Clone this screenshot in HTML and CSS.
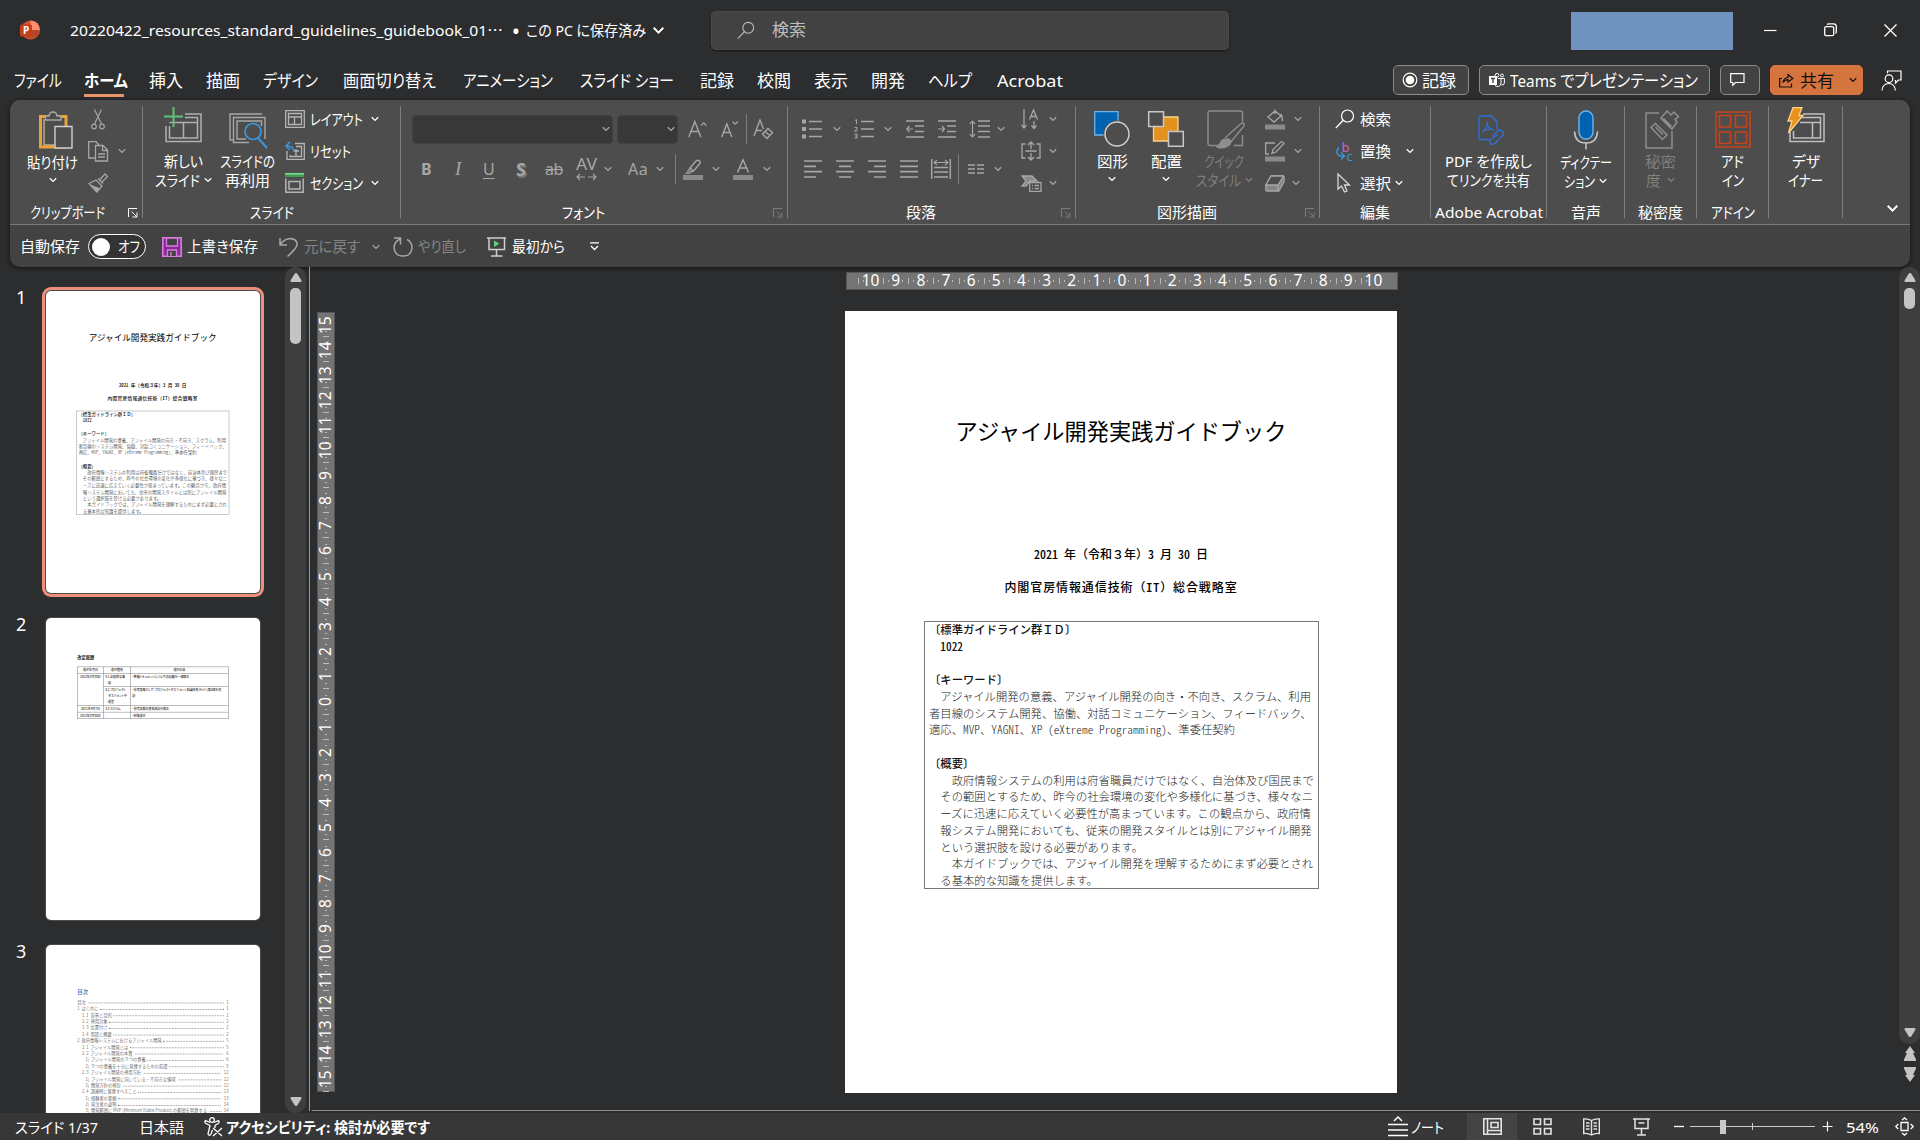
FILE: index.html
```html
<!DOCTYPE html>
<html lang="ja">
<head>
<meta charset="utf-8">
<title>PowerPoint</title>
<link rel="stylesheet" href="styles.css">
</head>
<body>
<svg class="defs" width="0" height="0">
  <symbol id="chev" viewBox="0 0 8 6"><path d="M.8 1.2 4 4.4 7.200 1.200" fill="none" stroke="currentColor" stroke-width="1.3"/></symbol>
  <symbol id="launch" viewBox="0 0 10 10"><path d="M.5 9V.5H9M3.500 3.500 8.500 8.500M9 4.500V9H4.500" fill="none" stroke="currentColor"/></symbol>
  <symbol id="lens" viewBox="0 0 20 20"><circle cx="12.500" cy="7" r="6" fill="none" stroke="currentColor" stroke-width="1.200"/><path d="M8.300 11.300.8 19" stroke="currentColor" stroke-width="1.300"/></symbol>
</svg>

<header class="titlebar">
  <svg class="app" width="20" height="20" viewBox="0 0 20 20"><circle cx="10.500" cy="10" r="9.500" fill="#d35230"/><path d="M10.500.5a9.500 9.500 0 0 1 9.500 9.500h-9.500z" fill="#ff8f6b"/><path d="M1.500 12a9.500 9.500 0 0 0 18.500-2h-9z" fill="#b7472a"/><rect y="4.500" width="12" height="12" rx="1.500" fill="#c43e1c"/><text x="3" y="14" font-size="10" font-weight="700" fill="#fff">P</text></svg>
  <div class="doc"><span data-w="433">20220422_resources_standard_guidelines_guidebook_01<span class="ell">…</span></span><span class="dot">•</span><span data-w="120">この PC に保存済み</span><svg class="dchev" width="13" height="9"><use href="#chev"/></svg></div>
  <div class="search"><svg width="18" height="19"><use href="#lens"/></svg><span>検索</span></div>
  <div class="account"></div>
  <div class="winbtns">
    <svg width="13" height="13"><path d="M0 6.500H12.500" stroke="#fff" stroke-width="1.200"/></svg>
    <svg width="13" height="14" fill="none" stroke="#fff" stroke-width="1.300"><rect x=".7" y="3.700" width="9" height="9" rx="1.500"/><path d="M3 1.500Q3.500.8 5 .8H9.500Q12.300.8 12.300 3.500V8.500Q12.300 10 11.500 10.500"/></svg>
    <svg width="13" height="13"><path d="M.5.5 12.500 12.500M12.500.5.5 12.500" stroke="#fff" stroke-width="1.400"/></svg>
  </div>
</header>

<nav class="tabs">
  <div class="tablist">
    <span data-w="48">ファイル</span><span class="active" data-w="44">ホーム</span><span data-w="34">挿入</span><span data-w="34">描画</span><span data-w="55">デザイン</span><span data-w="93">画面切り替え</span><span data-w="90">アニメーション</span><span data-w="94">スライド ショー</span><span data-w="34">記録</span><span data-w="34">校閲</span><span data-w="34">表示</span><span data-w="34">開発</span><span data-w="44">ヘルプ</span><span data-w="66">Acrobat</span>
  </div>
  <div class="tabbtns">
    <div class="btn rec"><svg width="16" height="16"><circle cx="8" cy="8" r="6.800" fill="none" stroke="#fff" stroke-width="1.200"/><circle cx="8" cy="8" r="4.300" fill="#fff"/></svg><span data-w="34">記録</span></div>
    <div class="btn teams"><svg width="16" height="15" fill="#fff"><path d="M0 3h8v9H0z"/><path d="M2 5.500h4M4 5.500V10" stroke="#444" stroke-width="1.300"/><circle cx="8" cy="2.300" r="1.900" fill="none" stroke="#fff"/><circle cx="13" cy="2.500" r="1.500" fill="none" stroke="#fff"/><path d="M9 5.500h3V10a3.500 3.500 0 0 1-6 2.500M12 5.500h3.400V10q-.5 2.500-3 2" fill="none" stroke="#fff"/></svg><span data-w="188">Teams でプレゼンテーション</span></div>
    <div class="btn note"><svg width="15" height="14" fill="none" stroke="#fff" stroke-width="1.200"><path d="M.7.700H14V9.500H5.500L2.800 12.300V9.500H.7z"/></svg></div>
    <div class="btn share"><svg width="15" height="15" fill="none" stroke="#111" stroke-width="1.200"><path d="M3 5.500H.7V14H12.500V10.500M4 9.500Q4.500 5 9 4.500V1.500L13.800 5.500 9 9V6.700Q6 6.500 4 9.500z"/></svg><span data-w="34">共有</span><svg width="8" height="6"><use href="#chev"/></svg></div>
    <svg width="21" height="21" fill="none" stroke="#fff" stroke-width="1.200"><path d="M6.500 3.500V1H20V10H17.500L14.500 13V10"/><circle cx="8" cy="8.700" r="3.800"/><path d="M1 20.500q.5-7 7-7 5.500 0 6.500 7"/></svg>
  </div>
</nav>

<section class="panel">
  <div class="ribbon">
    <div class="group g-clip">
      <div class="content">
        <div class="big"><div class="ico"><svg width="34" height="38" fill="none"><path d="M1.500 5.500H27V36H1.500z" stroke="#e8a33a" stroke-width="3"/><path d="M5 8V34H17" stroke="#f6d9a0" stroke-width="1"/><path d="M6.500 9V5H10Q10.500 1 14 1T18 5h4V9z" fill="#4d4d4d" stroke="#a8a8a8" stroke-width="1.400"/><path d="M16 15.500H33V37H16z" fill="#4d4d4d" stroke="#d0d0d0" stroke-width="1.400"/></svg></div><span data-w="51">貼り付け</span><svg class="cv" width="8" height="6"><use href="#chev"/></svg></div>
        <div class="rows dim">
          <div><svg width="14" height="21" fill="none" stroke="currentColor" stroke-width="1.200"><path d="M3.500.5 10.500 15M10.500.5 3.500 15"/><circle cx="3" cy="17.500" r="2.300"/><circle cx="11" cy="17.500" r="2.300"/></svg></div>
          <div class="copy"><svg width="21" height="21" fill="none" stroke="currentColor" stroke-width="1.300"><path d="M7 17H.7V.7H8L11 4M7.500 4.500H15L19.500 9V20H7.500zM14.500 4.500V9.500H19.500M10 13H17M10 16H17"/></svg><svg width="8" height="6"><use href="#chev"/></svg></div>
          <div><svg width="20" height="20" fill="none" stroke="currentColor" stroke-width="1.300"><path d="M1 10.500 8 7 14 13 9 19z"/><path d="M3 12.500 11 15.500 8.500 18.500z" fill="currentColor"/><path d="M10 5.500 15 10.500M11 7.500 17 1 19.500 3.500 13.500 9.500"/></svg></div>
        </div>
      </div>
      <div class="label"><span data-w="75">クリップボード</span><svg class="launch" width="10" height="10"><use href="#launch"/></svg></div>
    </div>

    <div class="group g-slide">
      <div class="content">
        <div class="big b1"><div class="ico up"><svg width="38" height="36" fill="none" stroke="#b0b0b0"><path d="M2 19V34.500H37V7H21" stroke-width="1.500"/><path d="M5.500 19V31H33.500V10.500H21M5.500 15.500H33.500M19.500 15.500V31" stroke-width="1.500"/><path d="M9.500 0V20M0 9.500H19" stroke="#63c174" stroke-width="2"/></svg></div><span data-w="39">新しい</span><span class="ln"><span data-w="45">スライド</span><svg width="8" height="6"><use href="#chev"/></svg></span></div>
        <div class="big b2"><div class="ico"><svg width="39" height="36" fill="none" stroke="#a8a8a8" stroke-width="1.400"><path d="M4 27H1V1H33M20 29.500H4.500V4.500H36V26M17 26H8V8H32.500V13"/><circle cx="24" cy="18.500" r="8" stroke="#3a96dd" stroke-width="1.700" fill="#4d4d4d"/><path d="M29 25 38 35" stroke="#3a96dd" stroke-width="2"/></svg></div><span data-w="55">スライドの</span><span data-w="45">再利用</span></div>
        <div class="rows">
          <div><svg width="20" height="18" fill="none" stroke="#b5b5b5" stroke-width="1.300"><path d="M.7.7H19.300V17.300H.7z"/><path d="M3.500 3.500H16.500V14.500H3.500zM3.500 7H16.500M9.500 7V14.500"/></svg><span data-w="53">レイアウト</span><svg width="8" height="6"><use href="#chev"/></svg></div>
          <div><svg width="20" height="18" fill="none" stroke="#b5b5b5" stroke-width="1.300"><path d="M2 9V17.300H19.300V1.500H10M5 13V14.500H16.500V4.500H11M9 9H14M11 7V14"/><path d="M9 10Q9 4 1.500 4M5 0 1 4 5 8" stroke="#3a96dd" stroke-width="1.600"/></svg><span data-w="41">リセット</span></div>
          <div><svg width="20" height="20" fill="none" stroke="#b5b5b5" stroke-width="1.500"><path d="M0 0H19V4H0z" fill="#3f9b52" stroke="none"/><path d="M0 .7H19" stroke="#7fe08f"/><path d="M.8 5.500V19.200H18.200V5.500M4 8.500H15V16H4z"/></svg><span data-w="53">セクション</span><svg width="8" height="6"><use href="#chev"/></svg></div>
        </div>
      </div>
      <div class="label"><span data-w="44">スライド</span></div>
    </div>

    <div class="group g-font">
      <div class="content two dim">
        <div class="f1">
          <div class="combo"><svg width="8" height="6"><use href="#chev"/></svg></div><div class="combo sz"><svg width="8" height="6"><use href="#chev"/></svg></div>
          <svg width="19" height="19" fill="none" stroke="currentColor" stroke-width="1.400"><path d="M.8 17 6.800 1.500 12.800 17M3 11.500H10.600"/><path d="M13 5.500 15.700 2.800 18.400 5.500" stroke-width="1.200"/></svg>
          <svg width="19" height="19" fill="none" stroke="currentColor" stroke-width="1.400"><path d="M.8 17 5.800 4 10.800 17M2.600 12.500H9"/><path d="M11.500 1.500 14.200 4.200 16.900 1.500" stroke-width="1.200"/></svg>
          <i class="sep"></i>
          <svg width="21" height="22" fill="none" stroke="currentColor" stroke-width="1.400"><path d="M1 18 7 2 10.500 11M3 12.500H9M9.500 16 15 10.500 19.500 14.500 14 20.500zM12 13.500 16.800 17.500"/></svg>
        </div>
        <div class="f2">
          <b class="gl">B</b><i class="gl ser">I</i><span class="gl un">U</span><b class="gl sh">S</b><s class="gl ab">ab</s>
          <svg width="22" height="25" fill="none" stroke="currentColor"><text x="0" y="13" font-size="16" stroke="none" fill="currentColor" textLength="21" lengthAdjust="spacingAndGlyphs">AV</text><path d="M1 20H9M4 17 1 20 4 23M12 20H20M17 17 20 20 17 23" stroke-width="1.100"/></svg>
          <svg width="8" height="6"><use href="#chev"/></svg><span class="gl aa">Aa</span><svg width="8" height="6"><use href="#chev"/></svg><i class="sep"></i>
          <svg width="20" height="21"><path d="M0 16H20V21H0z" fill="#8a8a8a"/><path d="M7 9 13 2Q15 .5 16.500 2T16.500 5L10.500 12zM7 9 4 14 10.500 12" fill="none" stroke="currentColor" stroke-width="1.400"/><path d="M2 15 6 10 9 13 7 15z" fill="#8a8a8a"/></svg><svg width="8" height="6"><use href="#chev"/></svg>
          <svg width="20" height="21"><path d="M0 16H20V21H0z" fill="#8a8a8a"/><path d="M4.500 13.500 10 .8 15.500 13.500M6.500 9H13.500" fill="none" stroke="currentColor" stroke-width="1.500"/></svg><svg width="8" height="6"><use href="#chev"/></svg>
        </div>
      </div>
      <div class="label"><span data-w="43">フォント</span><svg class="launch dim" width="10" height="10"><use href="#launch"/></svg></div>
    </div>

    <div class="group g-para">
      <div class="content dim">
        <div class="pleft">
          <div class="p1">
            <svg width="20" height="20" stroke="currentColor" stroke-width="1.700"><path d="M7 2.500H20M7 10H20M7 17.500H20"/><path d="M0 2.500H4M0 10H4M0 17.500H4" stroke-width="4"/></svg><svg width="8" height="6"><use href="#chev"/></svg>
            <svg width="20" height="20" stroke="currentColor" stroke-width="1.700"><path d="M7 2.500H20M7 10H20M7 17.500H20"/><path d="M1 1.500 2.500.5V5M.5 8.500H3V10L.5 12H3.500M.5 15H3V19H.5M1 17H3" stroke-width="1" fill="none"/></svg><svg width="8" height="6"><use href="#chev"/></svg>
            <svg width="18" height="18" fill="none" stroke="currentColor" stroke-width="1.700"><path d="M0 1H18M9 6H18M9 11.500H18M0 17H18"/><path d="M7 9H.8M3.500 6 .8 9 3.500 12" stroke-width="1.200"/></svg>
            <svg width="18" height="18" fill="none" stroke="currentColor" stroke-width="1.700"><path d="M0 1H18M9 6H18M9 11.500H18M0 17H18"/><path d="M0 9H6.500M4 6 6.500 9 4 12" stroke-width="1.200"/></svg>
            <svg width="21" height="18" fill="none" stroke="currentColor" stroke-width="1.700"><path d="M9 1H21M9 6H21M9 11.500H21M9 17H21"/><path d="M3.500 1V17M.8 3.800 3.500 1 6.200 3.800M.8 14.200 3.500 17 6.200 14.200" stroke-width="1.200"/></svg><svg width="8" height="6"><use href="#chev"/></svg>
          </div>
          <div class="p2">
            <svg width="18" height="18" stroke="currentColor" stroke-width="1.700"><path d="M0 1H18M0 6.300H12M0 11.600H18M0 17H12"/></svg>
            <svg width="18" height="18" stroke="currentColor" stroke-width="1.700"><path d="M0 1H18M3 6.300H15M0 11.600H18M3 17H15"/></svg>
            <svg width="18" height="18" stroke="currentColor" stroke-width="1.700"><path d="M0 1H18M6 6.300H18M0 11.600H18M6 17H18"/></svg>
            <svg width="18" height="18" stroke="currentColor" stroke-width="1.700"><path d="M0 1H18M0 6.300H18M0 11.600H18M0 17H18"/></svg>
            <svg width="20" height="20" fill="none" stroke="currentColor" stroke-width="1.500"><path d="M.7 0V20M19.300 0V20M3 8.500H17M3 13H17M3 18H17"/><path d="M3 3.500H17M6 1 3 3.500 6 6M14 1 17 3.500 14 6" stroke-width="1.100"/></svg>
            <i class="sep"></i>
            <svg width="16" height="10" stroke="currentColor" stroke-width="1.500"><path d="M0 1H7M9 1H16M0 5H7M9 5H16M0 9H7M9 9H16"/></svg><svg width="8" height="6"><use href="#chev"/></svg>
          </div>
        </div>
        <div class="rows">
          <div><svg width="20" height="21" fill="none" stroke="currentColor" stroke-width="1.300"><path d="M3 0V19M.5 16 3 19 5.500 16M13 12V19.500M10.500 16.500 13 19.500 15.500 16.500M8.500 10.500 12.500 1 16.500 10.500M10 7.500H15"/></svg><svg width="8" height="6"><use href="#chev"/></svg></div>
          <div><svg width="20" height="20" fill="none" stroke="currentColor" stroke-width="1.300"><path d="M4.500 3H1V17H4.500M15.500 3H19V17H15.500M4.500 10H15.500M10 1V8M7 4 10 1 13 4M10 12V19M7 16 10 19 13 16"/></svg><svg width="8" height="6"><use href="#chev"/></svg></div>
          <div><svg width="21" height="17" fill="none" stroke="currentColor" stroke-width="1.300"><path d="M1 1H11L16 6H9L5 11H1L5 6z" fill="#8a8a8a"/><path d="M8.700 7.500H20V16.300H8.700z" fill="#4d4d4d"/><path d="M11 10.500H12M13.500 10.500H18M11 13.500H12M13.500 13.500H18"/></svg><svg width="8" height="6"><use href="#chev"/></svg></div>
        </div>
      </div>
      <div class="label"><span data-w="30">段落</span><svg class="launch dim" width="10" height="10"><use href="#launch"/></svg></div>
    </div>

    <div class="group g-draw">
      <div class="content">
        <div class="big"><div class="ico"><svg width="36" height="36"><path d="M.7.7H24V24H.7z" fill="#0063b1" stroke="#6cb4ee" stroke-width="1.300"/><circle cx="23" cy="23" r="13.500" fill="#4d4d4d"/><circle cx="23" cy="23" r="12" fill="#4d4d4d" stroke="#d0d0d0" stroke-width="1.500"/></svg></div><span data-w="31">図形</span><svg class="cv" width="8" height="6"><use href="#chev"/></svg></div>
        <div class="big"><div class="ico"><svg width="36" height="36"><path d="M5.500 6H30V30H5.500z" fill="#e3911f" stroke="#fbd38a" stroke-width="1.300"/><path d="M.7.7H15.500V15.500H.7zM20.500 20.500H35.300V35.300H20.500z" fill="#4d4d4d" stroke="#c8c8c8" stroke-width="1.500"/></svg></div><span data-w="31">配置</span><svg class="cv" width="8" height="6"><use href="#chev"/></svg></div>
        <div class="big dimtext"><div class="ico"><svg width="39" height="38" fill="none" stroke="#8e8e8e" stroke-width="1.400"><path d="M10 35.500H3Q1 35.500 1 33.500V3Q1 1 3 1H33Q35.500 1 35.500 3V12M35.500 25V35.500H27"/><path d="M18 28 34 13.500Q38 12 37 16L23 33"/><path d="M10 36Q13 35 14 32T22 29Q26 33 21 36T10 37z" fill="#8e8e8e"/></svg></div><span data-w="40">クイック</span><span class="ln"><span data-w="45">スタイル</span><svg width="8" height="6"><use href="#chev"/></svg></span></div>
        <div class="rows dim">
          <div><svg width="20" height="21" fill="none" stroke="currentColor" stroke-width="1.400"><path d="M0 15.500H20V20.500H0z" fill="#8a8a8a" stroke="none"/><path d="M3 8 10 2 16 7 9 13zM10 5V.5M16 5Q18 9 17 12"/></svg><svg width="8" height="6"><use href="#chev"/></svg></div>
          <div><svg width="20" height="21" fill="none" stroke="currentColor" stroke-width="1.300"><path d="M0 15.500H20V20.500H0z" fill="#8a8a8a" stroke="none"/><path d="M10 2H.7V13H4M7 12.500 8 8.500 16 1Q18 .5 19 2.500L11 11z"/></svg><svg width="8" height="6"><use href="#chev"/></svg></div>
          <div class="er"><svg width="20" height="17" stroke="currentColor" stroke-width="1.300" stroke-linejoin="round"><path d="M6 1H17.500Q19.500 1 19 3V7L14 16H2Q.7 16 .8 14.500V10z" fill="#858585"/><path d="M6 1H18.500L13 10H.8z" fill="#4d4d4d"/><path d="M13 10V16"/></svg><svg width="8" height="6"><use href="#chev"/></svg></div>
        </div>
      </div>
      <div class="label"><span data-w="60">図形描画</span><svg class="launch dim" width="10" height="10"><use href="#launch"/></svg></div>
    </div>

    <div class="group g-edit">
      <div class="content">
        <div class="rows">
          <div><svg width="20" height="20"><use href="#lens"/></svg><span data-w="31">検索</span></div>
          <div class="rep"><svg width="20" height="21" fill="none"><text x="6.500" y="10.500" font-size="13" fill="#c864c8">b</text><text x="11.500" y="20" font-size="13" fill="#3a96dd">c</text><path d="M4 6.500Q-1 12 5 15H9M6 11.500 9.500 15 6 18.500" stroke="#3a96dd" stroke-width="1.400"/></svg><span data-w="31">置換</span><svg width="8" height="6"><use href="#chev"/></svg></div>
          <div><svg width="20" height="20"><path d="M3 1V16L6.500 13 9.500 19 12 18 9.500 12H14.500z" fill="none" stroke="#d8d8d8" stroke-width="1.300"/></svg><span data-w="31">選択</span><svg width="8" height="6"><use href="#chev"/></svg></div>
        </div>
      </div>
      <div class="label"><span data-w="30">編集</span></div>
    </div>

    <div class="group g-acro">
      <div class="content"><div class="big"><div class="ico"><svg width="26" height="30" fill="none" stroke="#2f6fe0" stroke-width="1.300"><path d="M11 24.500H3Q1 24.500 1 22.500V3Q1 1 3 1H13L19 7V14"/><path d="M9.500 7Q9.500 12 4.500 17.500M9.500 7V10Q11 14 16 15M5 16.500Q10 13.500 15.500 14.500" stroke-width="1.100"/><path d="M15 21 19 16.500Q22 14 24.500 16.500T24 21L22 23M20 19.500 13 24Q10.500 27 12.500 28.500T17 28.500L21 24"/></svg></div><span data-w="87">PDF を作成し</span><span data-w="83">てリンクを共有</span></div></div>
      <div class="label"><span data-w="108">Adobe Acrobat</span></div>
    </div>
    <div class="group g-voice">
      <div class="content"><div class="big low"><div class="ico"><svg width="26" height="40" fill="none"><rect x="6" y="1" width="14" height="28" rx="7" fill="#0063b1" stroke="#6cb4ee" stroke-width="1.400"/><path d="M1.500 21.500Q2 33 13 33T24.500 21.500M13 33V39.500" stroke="#c8c8c8" stroke-width="1.500"/></svg></div><span data-w="52">ディクテー</span><span class="ln"><span data-w="31">ション</span><svg width="8" height="6"><use href="#chev"/></svg></span></div></div>
      <div class="label"><span data-w="30">音声</span></div>
    </div>
    <div class="group g-sens">
      <div class="content"><div class="big dimtext"><div class="ico"><svg width="34" height="39" fill="none" stroke="#8e8e8e" stroke-width="1.500"><path d="M14 3H1V38H27V21"/><path d="M6 17.500 10.500 13.500 22 25 17.500 29.500zM10.500 17 18 24.500M16 8 22 1 26 5 29 2 33.500 7 30 9.500 32 12 27 19z"/><path d="M18 9 26 17" stroke-width="3"/></svg></div><span data-w="31">秘密</span><span class="ln"><span data-w="15">度</span><svg width="8" height="6"><use href="#chev"/></svg></span></div></div>
      <div class="label"><span data-w="45">秘密度</span></div>
    </div>
    <div class="group g-add">
      <div class="content"><div class="big"><div class="ico"><svg width="36" height="37" fill="none" stroke="#c8421a" stroke-width="1.600"><path d="M1 1H35V36H1z"/><path d="M4.500 4.500H15.500V16H4.500zM20.500 4.500H31.500V16H20.500zM4.500 21H15.500V32.500H4.500zM20.500 21H31.500V32.500H20.500z"/></svg></div><span data-w="23">アド</span><span data-w="22">イン</span></div></div>
      <div class="label"><span data-w="44">アドイン</span></div>
    </div>
    <div class="group g-des">
      <div class="content"><div class="big"><div class="ico up"><svg width="38" height="36" fill="none" stroke="#c0c0c0" stroke-width="1.500"><path d="M16 7H37V34.500H3V25M14 10.500H33.500V31H6.500V24M13 15.500H33.500M25.500 15.500V31"/><path d="M6 .7H15L12 8.500H16L1.500 26 5 14H1z" fill="#e8921e" stroke="#ffd387" stroke-width="1.300"/></svg></div><span data-w="28">デザ</span><span data-w="35">イナー</span></div></div>
    </div>
    <svg class="collapse" width="13" height="9"><use href="#chev"/></svg>
  </div>

  <div class="qat">
    <span data-w="60">自動保存</span>
    <div class="toggle"><i></i><span data-w="22">オフ</span></div>
    <svg width="20" height="20"><path d="M.8.800H19.200V19.200H.8z" fill="#8b2a96" stroke="#d77ee0" stroke-width="1.600"/><path d="M4.500 1V9H15.500V1z" fill="#424242" stroke="#d77ee0" stroke-width="1.300"/><path d="M5.500 19V13H14.500V19" fill="#424242" stroke="#d77ee0" stroke-width="1.300"/><path d="M9 15V19" stroke="#d77ee0" stroke-width="1.300"/></svg>
    <span data-w="71">上書き保存</span>
    <svg class="dim" width="20" height="20" fill="none" stroke="currentColor" stroke-width="1.500"><path d="M1 1V8H8M1 8Q5 1.500 12 1.500 18.500 2.500 18 8 17 12 8.500 19.500"/></svg>
    <span class="off" data-w="56">元に戻す</span>
    <svg class="dim" width="8" height="6"><use href="#chev"/></svg>
    <svg class="dim" width="20" height="20" fill="none" stroke="currentColor" stroke-width="1.500"><path d="M1 1H7.500V7.500M7 2Q1 5 1 11 2 19 10 19T19 11Q19 5 14 2.500"/></svg>
    <span class="off" data-w="48">やり直し</span>
    <svg width="20" height="20" fill="none" stroke="#d0d0d0" stroke-width="1.500"><path d="M0 1H19M2 1V12.500H17.500V1M9.500 12.500V18.500M4 19H15.500"/><path d="M7 3.500 12.500 6.700 7 10z" fill="#5fd07a" stroke="none"/></svg>
    <span data-w="53">最初から</span>
    <svg width="9" height="9" fill="none" stroke="#fff" stroke-width="1.300"><path d="M0 .8H9M1 4 4.500 7.500 8 4"/></svg>
  </div>
</section>

<main class="work">
  <aside class="thumbs">
    <div class="titem"><b>1</b><div class="thumb sel"><div class="page">
      <h1>アジャイル開発実践ガイドブック</h1>
      <p class="date"><u>2021 </u>年（令和３年）<u>3 </u>月<u> 30 </u>日</p><p class="org">内閣官房情報通信技術（<u>IT</u>）総合戦略室</p>
      <div class="box"><p class="hd">〔標準ガイドライン群ＩＤ〕</p><p class="hd">　<u>1022</u></p><p>&nbsp;</p><p class="hd">〔キーワード〕</p><p>　アジャイル開発の意義、アジャイル開発の向き・不向き、スクラム、利用</p><p>者目線のシステム開発、協働、対話コミュニケーション、フィードバック、</p><p>適応、<u>MVP</u>、<u>YAGNI</u>、<u>XP (eXtreme Programming)</u>、準委任契約</p><p>&nbsp;</p><p class="hd">〔概要〕</p><p>　　政府情報システムの利用は府省職員だけではなく、自治体及び国民まで</p><p>　その範囲とするため、昨今の社会環境の変化や多様化に基づき、様々なニ</p><p>　ーズに迅速に応えていく必要性が高まっています。この観点から、政府情</p><p>　報システム開発においても、従来の開発スタイルとは別にアジャイル開発</p><p>　という選択肢を設ける必要があります。</p><p>　　本ガイドブックでは、アジャイル開発を理解するためにまず必要とされ</p><p>　る基本的な知識を提供します。</p></div>
    </div></div></div>
    <div class="titem"><b>2</b><div class="thumb"><div class="page hist">
      <h2>改定履歴</h2>
      <table>
        <tr><th>改定年月日</th><th>改定箇所</th><th>改定内容</th></tr>
        <tr class="r1"><td rowspan="2" class="c">2022年3月30日</td><td>4.1 全般的な事<br>　項</td><td>・各種ドキュメントについての記載を一部修正</td></tr>
        <tr class="r2"><td>3.2 プロジェクト<br>　マネジメントや<br>　運営</td><td>・参考情報として「プロジェクトマネジメント知識体系ガイド」第6版を追<br>記</td></tr>
        <tr><td class="c">2021年4月7日</td><td>3.3 スクラム</td><td>・参考文献の書名誤記を修正</td></tr>
        <tr><td class="c">2021年3月30日</td><td>-</td><td>・初版決定</td></tr>
      </table>
    </div></div></div>
    <div class="titem"><b>3</b><div class="thumb"><div class="page toc">
      <h2>目次</h2>
      <p><span>目次</span><i></i><em>1</em></p>
      <p><span>1&nbsp; はじめに</span><i></i><em>1</em></p>
      <p class="l1"><span>1. 1&nbsp; 背景と目的</span><i></i><em>1</em></p>
      <p class="l1"><span>1. 2&nbsp; 適用対象</span><i></i><em>2</em></p>
      <p class="l1"><span>1. 3&nbsp; 位置付け</span><i></i><em>2</em></p>
      <p class="l1"><span>1. 4&nbsp; 用語と概要</span><i></i><em>2</em></p>
      <p><span>2&nbsp; 政府情報システムにおけるアジャイル開発</span><i></i><em>5</em></p>
      <p class="l1"><span>2. 1&nbsp; アジャイル開発とは</span><i></i><em>5</em></p>
      <p class="l1"><span>2. 2&nbsp; アジャイル開発の本質</span><i></i><em>6</em></p>
      <p class="l2"><span>1)&nbsp; アジャイル開発の９つの意義</span><i></i><em>6</em></p>
      <p class="l2"><span>2)&nbsp; ９つの意義を十分に発揮するための前提</span><i></i><em>9</em></p>
      <p class="l1"><span>2. 3&nbsp; アジャイル開発の適用方針</span><i></i><em>12</em></p>
      <p class="l2"><span>1)&nbsp; アジャイル開発に向いている・不向きな領域</span><i></i><em>12</em></p>
      <p class="l2"><span>2)&nbsp; 開発方針の検討</span><i></i><em>12</em></p>
      <p class="l1"><span>2. 4&nbsp; 調達時に留意すべきこと</span><i></i><em>13</em></p>
      <p class="l2"><span>1)&nbsp; 経験者の参画</span><i></i><em>13</em></p>
      <p class="l2"><span>2)&nbsp; 発注者の姿勢</span><i></i><em>14</em></p>
      <p class="l2"><span>3)&nbsp; 開発範囲に MVP (Minimum Viable Product) の範囲を明意する</span><i></i><em>14</em></p>
    </div></div></div>
  </aside>
  <div class="vbar left"><svg width="12" height="9"><path d="M6 0Q7 0 7.500 1L11.500 7.500Q12 9 10.500 9H1.500Q0 9 .5 7.500L4.500 1Q5 0 6 0z" fill="#c4c4c4"/></svg><i></i><svg class="dn" width="12" height="9"><path d="M6 9Q7 9 7.500 8L11.500 1.500Q12 0 10.500 0H1.500Q0 0 .5 1.500L4.500 8Q5 9 6 9z" fill="#c4c4c4"/></svg></div>
  <div class="split"></div>
  <div class="canvas">
    <div class="vruler"><span>15</span><span>14</span><span>13</span><span>12</span><span>11</span><span>10</span><span>9</span><span>8</span><span>7</span><span>6</span><span>5</span><span>4</span><span>3</span><span>2</span><span>1</span><span>0</span><span>1</span><span>2</span><span>3</span><span>4</span><span>5</span><span>6</span><span>7</span><span>8</span><span>9</span><span>10</span><span>11</span><span>12</span><span>13</span><span>14</span><span>15</span></div>
    <div class="stage">
      <div class="hruler"><span>10</span><span>9</span><span>8</span><span>7</span><span>6</span><span>5</span><span>4</span><span>3</span><span>2</span><span>1</span><span>0</span><span>1</span><span>2</span><span>3</span><span>4</span><span>5</span><span>6</span><span>7</span><span>8</span><span>9</span><span>10</span></div>
      <div class="page main">
        <h1>アジャイル開発実践ガイドブック</h1>
        <p class="date"><u>2021 </u>年（令和３年）<u>3 </u>月<u> 30 </u>日</p><p class="org">内閣官房情報通信技術（<u>IT</u>）総合戦略室</p>
        <div class="box"><p class="hd">〔標準ガイドライン群ＩＤ〕</p><p class="hd">　<u>1022</u></p><p>&nbsp;</p><p class="hd">〔キーワード〕</p><p>　アジャイル開発の意義、アジャイル開発の向き・不向き、スクラム、利用</p><p>者目線のシステム開発、協働、対話コミュニケーション、フィードバック、</p><p>適応、<u>MVP</u>、<u>YAGNI</u>、<u>XP (eXtreme Programming)</u>、準委任契約</p><p>&nbsp;</p><p class="hd">〔概要〕</p><p>　　政府情報システムの利用は府省職員だけではなく、自治体及び国民まで</p><p>　その範囲とするため、昨今の社会環境の変化や多様化に基づき、様々なニ</p><p>　ーズに迅速に応えていく必要性が高まっています。この観点から、政府情</p><p>　報システム開発においても、従来の開発スタイルとは別にアジャイル開発</p><p>　という選択肢を設ける必要があります。</p><p>　　本ガイドブックでは、アジャイル開発を理解するためにまず必要とされ</p><p>　る基本的な知識を提供します。</p></div>
      </div>
    </div>
    <div class="rightbar">
      <div class="vbar right"><svg width="12" height="9"><path d="M6 0Q7 0 7.500 1L11.500 7.500Q12 9 10.500 9H1.500Q0 9 .5 7.500L4.500 1Q5 0 6 0z" fill="#c4c4c4"/></svg><i></i><svg class="dn" width="12" height="9"><path d="M6 9Q7 9 7.500 8L11.500 1.500Q12 0 10.500 0H1.500Q0 0 .5 1.500L4.500 8Q5 9 6 9z" fill="#c4c4c4"/></svg></div>
      <svg width="12" height="15" fill="#c4c4c4"><path d="M6 0 11 7H9L12 13.500V15H0V13.500L3 7H1z"/></svg>
      <svg width="12" height="15" fill="#c4c4c4"><path d="M6 15 11 8H9L12 1.500V0H0V1.500L3 8H1z"/></svg>
    </div>
  </div>
</main>

<footer class="status">
  <div class="sl"><span data-w="83">スライド 1/37</span><span data-w="45">日本語</span><svg width="19" height="20" fill="none" stroke="#fff" stroke-width="1.300"><circle cx="8" cy="3" r="2.300"/><path d="M6 5.500 1.500 3.500Q0 5.500 2 6.500L6 8.500 4 17Q5.500 19.500 7 17L8.500 13M10 5.500 14.500 3.500Q16 5.500 14 6.500L11 8.500V11M9 11 18 19M18 11 9 19"/></svg><strong data-w="204">アクセシビリティ: 検討が必要です</strong></div>
  <div class="sr">
    <svg width="20" height="21" fill="none" stroke="#fff" stroke-width="1.500"><path d="M6 5 10 1 14 5M0 8.500H20M0 14H20M0 19.500H20"/></svg><span data-w="33">ノート</span>
    <div class="view"><svg width="19" height="17" fill="none" stroke="#e4e4e4" stroke-width="1.600"><path d="M.8.8H18.200V16.200H.8zM4.500 1V16M4.500 12.500H18M8 4.500H15V9.500H8z"/></svg></div>
    <svg width="19" height="17" fill="none" stroke="#e4e4e4" stroke-width="1.600"><path d="M1 1H7.500V6.500H1zM11.500 1H18V6.500H11.500zM1 10.500H7.500V16H1zM11.500 10.500H18V16H11.500z"/></svg>
    <svg width="17" height="18" fill="none" stroke="#e4e4e4" stroke-width="1.400"><path d="M8.500 2.500Q5 .5.7 1V15.500Q5 15 8.500 17 12 15 16.300 15.500V1Q12 .5 8.500 2.500V17M3 5H6.500M3 8H6.500M3 11H6.500M10.500 5H14M10.500 8H14M10.500 11H14"/></svg>
    <svg width="17" height="18" fill="none" stroke="#e4e4e4" stroke-width="1.500"><path d="M0 1H17M2 1V10.500H15V1M8.500 10.500V17M4 17H13M5.500 5H11.500"/></svg>
    <svg width="11" height="11"><path d="M0 5.500H10" stroke="#fff" stroke-width="1.300"/></svg>
    <div class="slider"><i></i></div>
    <svg width="11" height="11"><path d="M.5 5.500H10.500M5.500.5V10.500" stroke="#fff" stroke-width="1.200"/></svg>
    <span data-w="33">54%</span>
    <svg width="19" height="19" fill="none" stroke="#fff" stroke-width="1.300"><path d="M6 5.500H13V13.500H6zM7 3 9.500.8 12 3M7 16 9.500 18.200 12 16M3.300 7 .8 9.500 3.300 12M15.700 7 18.200 9.500 15.700 12"/></svg>
  </div>
</footer>
<script src="fit.js"></script>
</body>
</html>
```
FILE: styles.css
```css
* { box-sizing: border-box; }
body { margin: 0; width: 1920px; height: 1140px; overflow: hidden; display: flex; flex-direction: column; background: #2c2d2f; color: #fff; font-family: "Noto Sans", "Noto Sans CJK JP", sans-serif; font-size: 15px; line-height: 19px; text-spacing-trim: space-all; }
svg { display: block; flex: none; overflow: visible; }
.defs { position: absolute; }
[data-w] { display: inline-block; white-space: nowrap; transform-origin: 0 50%; flex: none; font-feature-settings: "palt"; }

.titlebar { height: 60px; display: flex; align-items: center; padding-left: 20px; flex: none; }
.doc { display: flex; align-items: center; margin-left: 30px; width: 641px; }
.doc .dot { width: 12px; margin: 0 4px 0 7px; font-size: 22px; text-align: center; }
.ell { font-family: "Noto Sans CJK JP", sans-serif; }
.dchev { margin-left: 6px; }
.search { width: 518px; height: 39px; margin-top: 1px; background: #424242; border-radius: 5px; display: flex; align-items: center; padding-left: 26px; gap: 17px; font-size: 17px; color: #bdbdbd; box-shadow: 0 1px 2px #151515, inset 0 0 0 1px #4a4a4a; }
.search span { margin-top: -3px; }
.account { margin-left: 342px; width: 162px; height: 38px; margin-top: 2px; background: #7092be; }
.winbtns { display: flex; gap: 47px; margin-left: 31px; align-items: center; }

.tabs { height: 40px; flex: none; display: flex; justify-content: space-between; font-size: 17px; padding-right: 18px; }
.tablist { display: grid; grid-template-columns: 70px 65px 57px 57px 80px 120px 117px 120px 57px 57px 57px 57px 69px 70px; padding-left: 14px; line-height: 42px; }
.tablist span { justify-self: start; }
.tablist .active { font-weight: 700; background: linear-gradient(#e8956a, #e8956a) 0 34px / 100% 3px no-repeat; }
.tabbtns { display: flex; align-items: center; height: 40px; }
.btn { height: 30px; border: 1px solid #8b8b8b; border-radius: 5px; background: #434343; display: flex; align-items: center; margin-right: 10px; }
.rec { width: 76px; padding-left: 8px; gap: 4px; }
.teams { width: 231px; padding-left: 9px; gap: 5px; }
.note { width: 40px; padding-left: 9px; }
.share { width: 93px; padding-left: 8px; gap: 6px; background: #d6743f; border-color: #d6743f; color: #111; margin-right: 18px; }
.share svg:last-child { margin-left: 9px; }

.panel { height: 167px; margin: 0 10px; flex: none; border-radius: 10px; background: #424242; overflow: hidden; box-shadow: 0 1px 4px #111; }
.panel [data-w] { translate: 0 -.5px; }
.ribbon { height: 125px; background: #4d4d4d; border-bottom: 1px solid #7a7a7a; display: flex; padding-top: 6px; }
.group { height: 112px; border-right: 1px solid #7f7f7f; flex: none; }
.content { height: 100px; display: flex; }
.label { height: 12px; line-height: 12px; position: relative; display: flex; justify-content: center; }
.launch { position: absolute; right: 4px; top: 2px; }
.dim { color: #a6a6a6; }
.launch.dim { color: #7c7c7c; }
.dimtext { color: #7f7f7f; }
.big { display: flex; flex-direction: column; align-items: center; flex: none; }
.ico { height: 46px; display: flex; align-items: center; }
.ico.up { padding-bottom: 8px; }
.big > [data-w], .ln { margin-top: -.5px; margin-bottom: .5px; }
.cv { margin-top: 5px; }
.ln { display: flex; align-items: center; gap: 4px; height: 19px; }
.low { padding-top: 1px; }
.rows { display: grid; grid-template-rows: 26px 38px 26px; align-content: start; }
.rows > div { display: flex; align-items: center; }

.g-clip { width: 133px; }
.g-clip .big { margin-left: 17px; width: 51px; padding-top: 1px; }
.g-clip .ico { padding-left: 7px; }
.g-clip .rows { margin-left: 9px; }
.g-clip .rows > div { padding-left: 1px; }
.g-clip .rows > div:first-child { padding-left: 4px; }
.copy { gap: 9px; }
.g-clip .label { padding-right: 17px; }
.g-slide { width: 258px; }
.g-slide .b1 { width: 56px; margin-left: 12px; }
.g-slide .b2 { width: 56px; margin-left: 8px; }
.g-slide .b2 .ico { padding: 3px 0 0 3px; }
.g-slide .rows { margin-left: 10px; }
.g-slide .rows span { margin: 0 8px 0 5px; }

.g-font { width: 387px; }
.g-font .label { padding-right: 21px; }
.two { display: block; padding-top: 3px; }
.f1, .f2, .p1, .p2 { display: grid; height: 40px; align-items: center; }
.f1 { grid-template-columns: 205px 71px 33px 25px 7px 30px; padding-left: 11px; }
.f2 { grid-template-columns: 32px 30px 33px 28px 32px 28px 24px 28px 19px 8px 29px 21px 30px 10px; padding-left: 20px; }
.combo { width: 201px; height: 29px; border-radius: 5px; background: #383838; box-shadow: inset 0 0 0 1px #414141; display: flex; align-items: center; justify-content: flex-end; padding-right: 3px; }
.combo.sz { width: 61px; }
.sep { width: 1px; height: 30px; background: #7f7f7f; }
.gl { font-size: 16px; line-height: 24px; white-space: nowrap; }
.ser { font-family: "Liberation Serif", serif; font-size: 19px; padding-left: 2px; }
.un { text-decoration: underline; text-underline-offset: 3px; }
.sh { font-size: 18px; text-shadow: 1.5px 1.5px 0 #777; }
.ab { font-size: 16px; letter-spacing: -.5px; padding-left: 1px; }
.aa { letter-spacing: .5px; }

.g-para { width: 288px; }
.pleft { width: 232px; padding-top: 3px; flex: none; }
.p1 { grid-template-columns: 31px 21px 30px 22px 32px 31px 28px 12px; padding-left: 14px; }
.p2 { grid-template-columns: 32px 32px 32px 31px 27px 10px 26px 12px; padding-left: 16px; }
.g-para .rows > div { display: grid; grid-template-columns: 28px 8px; }
.g-para .rows { padding-left: 1px; }
.g-para .label { padding-right: 22px; }

.g-draw { width: 244px; }
.g-draw .big { width: 54px; margin-left: 9px; }
.g-draw .big + .big { margin-left: 0; }
.g-draw .big.dimtext { width: 62px; }
.g-draw .big.dimtext .ico { padding-left: 5px; }
.g-draw .rows { margin-left: 10px; }
.g-draw .rows > div { gap: 9px; }
.g-draw .rows .er { gap: 7px; }
.g-draw .label { padding-right: 21px; }

.g-edit { width: 111px; }
.g-edit .rows { margin-left: 15px; }
.g-edit .rows span { margin: 0 4px 0 5px; }
.g-edit .rep span { margin-right: 15px; }
.g-acro { width: 116px; }
.g-acro .big, .g-voice .big, .g-sens .big, .g-add .big, .g-des .big { width: 100%; }
.g-acro .ico { padding: 1px 0 0 4px; }
.g-voice { width: 78px; }
.g-sens { width: 72px; }
.g-sens .ico { padding-left: 3px; }
.g-add { width: 72px; }
.g-des { width: 74px; }
.g-sens .ln { gap: 6px; }
.collapse { margin: 98px 0 0 43px; }

.qat { height: 42px; display: grid; grid-template-columns: 68px 74px 25px 92px 25px 68px 21px 25px 69px 25px 78px 10px; padding: 1px 0 0 10px; align-items: center; }
.toggle { width: 58px; height: 25px; border: 1.300px solid #fff; border-radius: 13px; background: #333; display: flex; align-items: center; padding-left: 3px; gap: 8px; }
.toggle i { width: 18px; height: 18px; border-radius: 50%; background: #fff; }
.off { color: #858585; }

.work { height: 846px; flex: none; display: flex; }
.thumbs { width: 285px; height: 846px; overflow: hidden; padding-top: 24px; flex: none; }
.titem { display: flex; height: 327px; }
.titem b { font-weight: 400; font-size: 18px; width: 46px; padding-left: 16px; flex: none; line-height: 13px; }
.thumb { width: 214px; height: 302px; border-radius: 5px; background: #fff; box-shadow: 0 0 0 1px #4b4b4b; }
.thumb.sel { box-shadow: 0 0 0 1px #4b4b4b, 0 0 0 4px #ee8e7c; }
.thumb .page { transform: scale(.3865); transform-origin: 0 0; background: none; }
.vbar { width: 21px; background: #3e3e3e; border-radius: 10px; display: flex; flex-direction: column; align-items: center; padding: 6px 0 7px; }
.vbar i { width: 11px; border-radius: 5px; background: #c4c4c4; margin-top: 6px; }
.vbar .dn { margin-top: auto; }
.vbar.left { height: 846px; }
.vbar.left i { height: 56px; }
.vbar.right { height: 777px; }
.vbar.right i { height: 21px; }
.split { width: 1px; height: 844px; background: #9a9a9a; margin: 0 2px 0 3px; }
.canvas { flex: 1; height: 844px; border-bottom: 1px solid #8f8f8f; display: flex; }
.stage { margin-left: 510px; width: 1054px; padding-top: 5px; flex: none; }
.hruler, .vruler { background: #747474; border: 1px solid #565656; display: flex; justify-content: center; font-size: 15.500px; line-height: 14px; flex: none; }
.hruler { width: 552px; height: 18px; margin-left: 1px; }
.hruler span, .vruler span { flex: none; display: flex; align-items: center; justify-content: center; }
.hruler span { width: 25.15px; padding-bottom: 2px; background: linear-gradient(#bbb, #bbb) 0 50% / 1px 6px no-repeat, linear-gradient(#bbb, #bbb) 5px 50% / 1px 2px no-repeat, linear-gradient(#bbb, #bbb) 19px 50% / 1px 2px no-repeat; }
.vruler { width: 18px; height: 780px; margin: 45px 0 0 5px; writing-mode: vertical-rl; transform: rotate(180deg); }
.vruler span { height: 25.16px; width: 16px; padding-left: 2px; background: linear-gradient(#bbb, #bbb) 50% 0 / 6px 1px no-repeat, linear-gradient(#bbb, #bbb) 50% 5px / 2px 1px no-repeat, linear-gradient(#bbb, #bbb) 50% 19px / 2px 1px no-repeat; }
.rightbar { width: 21px; display: flex; flex-direction: column; align-items: center; gap: 2px; margin-left: auto; }
.rightbar > svg + svg { margin-top: 4px; }

.page { width: 552px; height: 782px; padding-top: 103px; background: #fff; color: #1a1a1a; font-family: "Noto Sans CJK JP", sans-serif; white-space: nowrap; }
.page.main { margin-top: 21px; }
.page u { text-decoration: none; font-feature-settings: "hwid"; }
.page h1 { margin: 0; text-align: center; font-size: 22.200px; line-height: 32px; font-weight: 400; color: #000; }
.page p { margin: 0; }
.page .date, .page .org { text-align: center; font-size: 12px; line-height: 20px; font-weight: 500; color: #000; }
.page .date { margin-top: 98px; }
.page .org { margin-top: 13px; letter-spacing: .9px; }
.box { margin: 24px 0 0 79px; width: 395px; height: 268px; border: 1px solid #777; padding: 0 0 0 4px; }
.box p { font-size: 11.330px; line-height: 16.730px; font-weight: 300; color: #222; position: relative; top: -1px; }
.box p.hd { font-weight: 500; color: #111; }
.page h2 { margin: 0 0 0 81px; font-size: 11px; line-height: 16px; font-weight: 700; }
.page.hist { padding-top: 94px; }
.hist table { margin: 16px 0 0 81px; width: 391px; border-collapse: collapse; font-size: 7.700px; line-height: 15px; table-layout: fixed; }
.hist th, .hist td { border: 1px solid #555; padding: 0 4px; height: 17px; vertical-align: top; text-align: left; font-weight: 500; font-feature-settings: "palt"; }
.hist th:nth-child(1) { width: 67px; }
.hist th:nth-child(2) { width: 70px; }
.hist .r1 td { height: 34px; }
.hist .r2 td { height: 49px; }
.hist th, .hist .c { text-align: center; padding: 0; }
.page.toc { padding-top: 112px; }
.toc h2 { font-size: 14px; color: #3f6fae; font-weight: 500; margin-bottom: 11px; }
.toc p { display: flex; margin-left: 81px; width: 391px; font-size: 11px; line-height: 16.550px; font-weight: 300; color: #333; }
.toc p.l1 { padding-left: 12px; }
.toc p.l2 { padding-left: 21px; }
.toc i { flex: 1; height: 12px; margin: 0 6px 0 4px; border-bottom: 2px dotted #777; }
.toc em { font-style: normal; }

.status { flex: 1; background: #373737; display: flex; justify-content: space-between; position: relative; }
.status [data-w] { translate: 0 1px; }
.sl, .sr { display: grid; align-items: center; height: 27px; }
.sl { grid-template-columns: 124px 65px 22px 210px; padding-left: 15px; }
.sr { grid-template-columns: 23px 56px 66px 50px 50px 41px 16px 132px 24px 49px 19px; padding-right: 6px; }
.view { width: 50px; height: 27px; background: #444; display: flex; align-items: center; padding-left: 16px; }
.slider { width: 125px; height: 14px; background: linear-gradient(#ccc, #ccc) 0 50% / 100% 1px no-repeat, linear-gradient(#ccc, #ccc) 62px 50% / 1px 7px no-repeat; padding-left: 30px; }
.slider i { display: block; width: 6px; height: 14px; background: #c8c8c8; }
```
FILE: fit.js
```js
const labels = [...document.querySelectorAll('[data-w]')];
const widths = labels.map(el => {
  const r = document.createRange();
  r.selectNodeContents(el);
  return r.getBoundingClientRect().width;
});
labels.forEach((el, i) => {
  const target = Number(el.dataset.w);
  el.style.width = target + 'px';
  el.style.transform = 'scaleX(' + target / widths[i] + ')';
});
```
